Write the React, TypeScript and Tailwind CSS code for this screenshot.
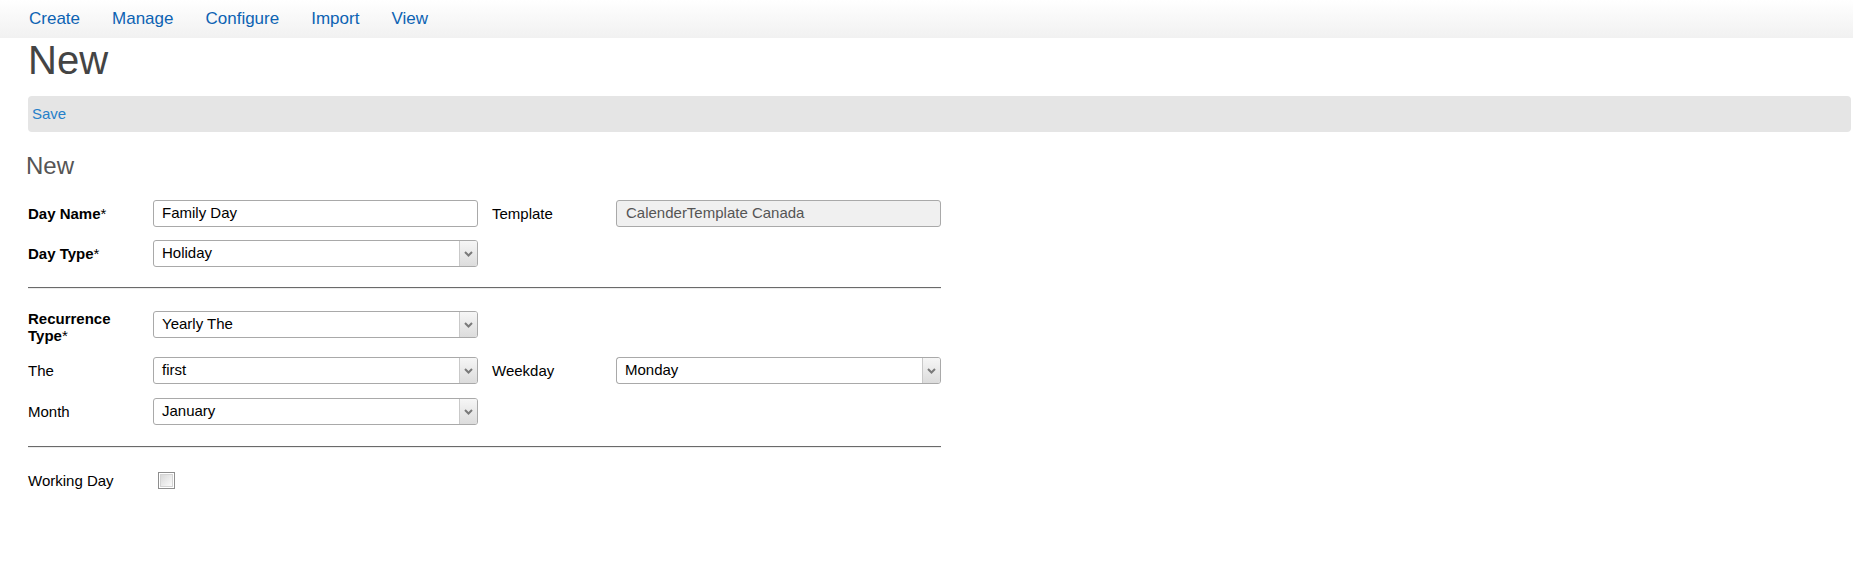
import React from "react";

const Chevron = () => (
  <svg width="9" height="6" viewBox="0 0 9 6" aria-hidden>
    <path d="M1 1 L4.5 4.5 L8 1" fill="none" stroke="#7a7a7a" strokeWidth="2" />
  </svg>
);

function Select({ value, focused }: { value: string; focused?: boolean }) {
  return (
    <div className="flex h-[27px] w-[325px] rounded-[3px] border border-[#a9a9a9] bg-white overflow-hidden">
      <div
        className={
          focused
            ? "flex-1 flex items-center pl-[8px] text-black -m-px border border-dotted border-[#555] border-r-0 rounded-l-[3px]"
            : "flex-1 flex items-center pl-[8px] text-black"
        }
      >
        {value}
      </div>
      <div className="w-[18px] h-full flex items-center justify-center bg-gradient-to-b from-[#f6f6f6] to-[#dcdcdc] border-l border-[#c9c9c9]">
        <Chevron />
      </div>
    </div>
  );
}

function Label({ children }: { children: React.ReactNode }) {
  return <div className="w-[125px] shrink-0 leading-[17px] text-black">{children}</div>;
}

function Label2({ children }: { children: React.ReactNode }) {
  return <div className="w-[124px] shrink-0 ml-[14px] leading-[17px] text-black">{children}</div>;
}

export default function App() {
  return (
    <div
      className="min-h-[561px] bg-white text-[15px]"
      style={{ fontFamily: '"Liberation Sans", Arial, sans-serif' }}
    >
      <nav className="h-[38px] pt-[9px] pl-[13px] flex bg-gradient-to-b from-white to-[#f1f1f1]">
        {["Create", "Manage", "Configure", "Import", "View"].map((t) => (
          <span key={t} className="px-4 text-[17px] leading-[20px] text-[#0d63b3]">
            {t}
          </span>
        ))}
      </nav>

      <div className="pl-[28px] pr-[2px]">
        <h1 className="text-[40px] leading-[44px] text-[#444]">New</h1>

        <div className="mt-[14px] h-[36px] rounded-[4px] bg-[#e5e5e5] pt-[9px] pl-[4px] leading-[17px]">
          <span className="text-[#2580c9]">Save</span>
        </div>

        <h2 className="-ml-[2px] mt-[21px] text-[24px] leading-[26px] text-[#555]">New</h2>

        <div className="mt-[21px] w-[913px]">
          <div className="flex items-center h-[27px]">
            <Label>
              <b>Day Name</b>*
            </Label>
            <div className="h-[27px] w-[325px] rounded-[3px] border border-[#a9a9a9] bg-white flex items-center pl-[8px] text-black">
              Family Day
            </div>
            <Label2>Template</Label2>
            <div className="h-[27px] w-[325px] rounded-[3px] border border-[#a9a9a9] bg-[#f0f0f0] flex items-center pl-[9px] text-[#555]">
              CalenderTemplate Canada
            </div>
          </div>

          <div className="mt-[13px] flex items-center h-[27px]">
            <Label>
              <b>Day Type</b>*
            </Label>
            <Select value="Holiday" />
          </div>

          <div className="mt-[20px] border-t border-t-[#6a6a6a] border-b border-b-[#ececec]" />

          <div className="mt-[21px] flex items-start">
            <Label>
              <b>Recurrence</b>
              <br />
              <b>Type</b>*
            </Label>
            <div className="mt-[1px]">
              <Select value="Yearly The" />
            </div>
          </div>

          <div className="mt-[13px] flex items-center h-[27px]">
            <Label>The</Label>
            <Select value="first" />
            <Label2>Weekday</Label2>
            <Select value="Monday" focused />
          </div>

          <div className="mt-[14px] flex items-center h-[27px]">
            <Label>Month</Label>
            <Select value="January" />
          </div>

          <div className="mt-[21px] border-t border-t-[#6a6a6a] border-b border-b-[#ececec]" />

          <div className="mt-[24px] flex items-start">
            <Label>Working Day</Label>
            <div className="ml-[5px] w-[17px] h-[17px] border border-[#8e8e8e] bg-white p-px">
              <div className="w-full h-full border border-[#d4d4d4] bg-gradient-to-br from-[#d9d9d9] to-[#fbfbfb]" />
            </div>
          </div>
        </div>
      </div>
    </div>
  );
}
